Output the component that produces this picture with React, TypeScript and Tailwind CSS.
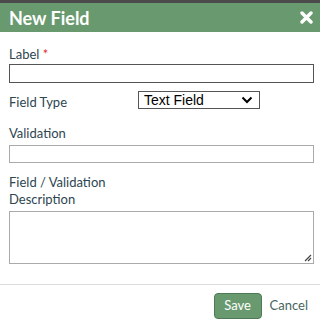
import React from "react";

export default function App() {
  return (
    <div className="w-[320px] h-[327px] bg-white flex flex-col" style={{ fontFamily: "Lato, 'Open Sans', sans-serif" }}>
      <div className="h-[3px] bg-[#4b4b4b]" />
      <div className="h-[29px] bg-[#699a6f] flex items-center justify-between pl-[9px] pr-[7px]">
        <span className="text-white font-bold text-[18px] leading-none">New Field</span>
        <svg width="13" height="13" viewBox="0 0 13 13">
          <path d="M2 2 L11 11 M11 2 L2 11" stroke="white" strokeWidth="3.4" strokeLinecap="round" />
        </svg>
      </div>
      <div className="flex-1 flex flex-col pl-[9px] pr-[6px] pt-[14px] text-[13px] text-[#2d4650]">
        <div className="leading-[16px] h-[17px]">
          Label <span className="text-[#e03030]">*</span>
        </div>
        <input className="h-[19px] border border-[#555] w-full mt-[1px]" />
        <div className="flex items-start mt-[8px]">
          <span className="w-[129px] pt-[3px] leading-[16px]">Field Type</span>
          <div className="w-[122px] h-[18px] border border-[#555] flex items-center justify-between pl-[5px] pr-[6px] text-black text-[14px]" style={{ fontFamily: "'Liberation Sans', Arial, sans-serif" }}>
            <span>Text Field</span>
            <svg width="12" height="8" viewBox="0 0 12 8">
              <path d="M1.5 1.5 L6 6 L10.5 1.5" stroke="black" strokeWidth="2" fill="none" />
            </svg>
          </div>
        </div>
        <div className="mt-[15px] leading-[16px]">Validation</div>
        <input className="h-[18px] border border-[#aaa] w-full mt-[4px]" />
        <div className="mt-[11px] leading-[17px]">Field / Validation</div>
        <div className="leading-[17px]">Description</div>
        <div className="relative h-[53px] border border-[#aaa] w-full mt-[3px]">
          <svg width="10" height="10" viewBox="0 0 10 10" className="absolute right-[1px] bottom-[1px]">
            <path d="M9 3 L3 9 M9 6 L6 9" stroke="#444" strokeWidth="1.2" />
          </svg>
        </div>
      </div>
      <div className="h-px bg-[#ddd]" />
      <div className="h-[42px] flex items-center justify-end pr-[12px] gap-[8px] text-[13px]">
        <button className="h-[26px] w-[48px] rounded-[4px] bg-[#699a6f] border border-[#4f7a55] text-white">Save</button>
        <span className="text-[#4a6660]">Cancel</span>
      </div>
    </div>
  );
}
